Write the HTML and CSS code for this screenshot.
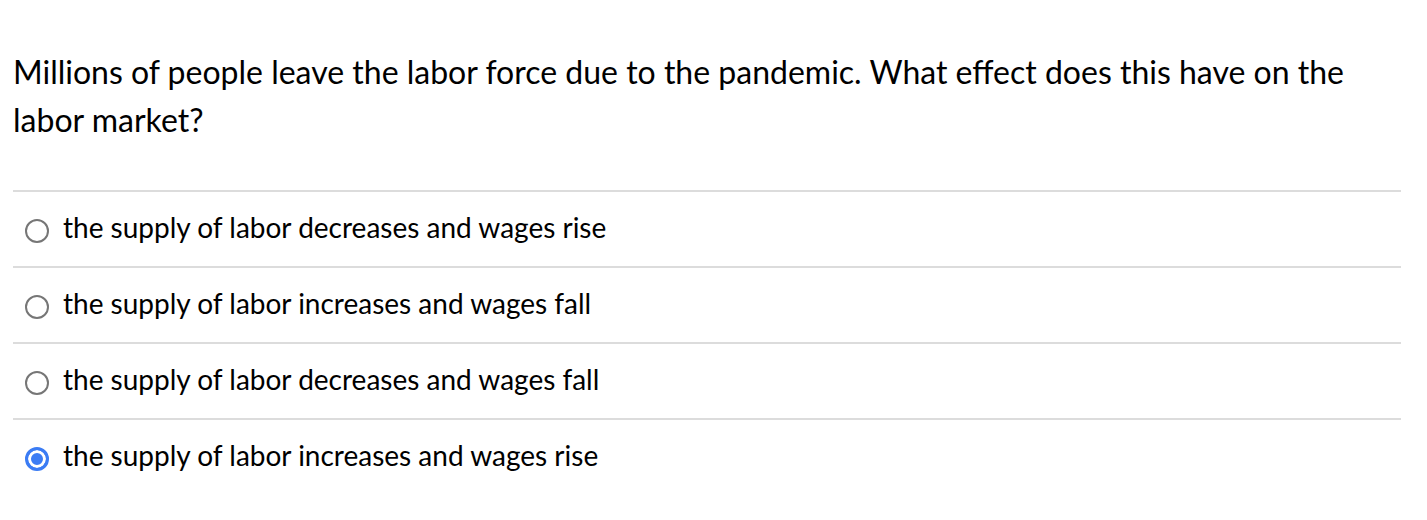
FILE: index.html
```html
<!DOCTYPE html>
<html>
<head>
<meta charset="utf-8">
<link rel="stylesheet" href="styles.css">
</head>
<body>
<div class="quiz">
  <p class="question">Millions of people leave the labor force due to the pandemic. What effect does this have on the labor market?</p>
  <div class="answers">
    <label class="answer"><input type="radio" name="a" class="radio"><span class="answer-text">the supply of labor decreases and wages rise</span></label>
    <label class="answer"><input type="radio" name="a" class="radio"><span class="answer-text">the supply of labor increases and wages fall</span></label>
    <label class="answer"><input type="radio" name="a" class="radio"><span class="answer-text">the supply of labor decreases and wages fall</span></label>
    <label class="answer"><input type="radio" name="a" class="radio" checked><span class="answer-text">the supply of labor increases and wages rise</span></label>
  </div>
</div>
</body>
</html>
```
FILE: styles.css
```css
html, body {
  margin: 0;
  padding: 0;
  background: #fff;
}
body {
  font-family: Lato, "Open Sans", sans-serif;
  color: #000;
}
.quiz {
  padding: 48px 26px 0 13px;
}
.question {
  margin: 0 0 46px 0;
  font-size: 32px;
  line-height: 48px;
}
.answers {
  display: flex;
  flex-direction: column;
}
.answer {
  display: flex;
  align-items: center;
  height: 74px;
  border-top: 2px solid #dcdcdc;
  font-size: 28px;
}
.answer-text {
  margin-top: -4px;
}
.radio {
  appearance: none;
  -webkit-appearance: none;
  box-sizing: border-box;
  width: 24px;
  height: 24px;
  margin: 3px 14px 0 12px;
  border: 2px solid #767676;
  border-radius: 50%;
  background: #fff;
  flex: none;
}
.radio:checked {
  border: 3px solid #3b7cf4;
  background: #3b7cf4;
  box-shadow: inset 0 0 0 3px #fff;
}
```
